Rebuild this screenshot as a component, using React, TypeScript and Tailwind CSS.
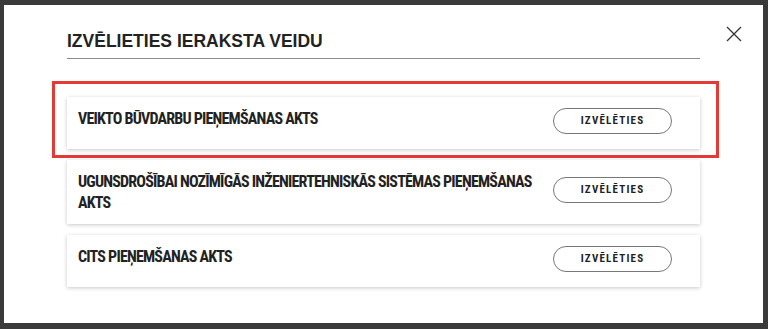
const items = [
  'VEIKTO BŪVDARBU PIEŅEMŠANAS AKTS',
  'UGUNSDROŠĪBAI NOZĪMĪGĀS INŽENIERTEHNISKĀS SISTĒMAS PIEŅEMŠANAS AKTS',
  'CITS PIEŅEMŠANAS AKTS',
];

const condensed = "font-['Roboto_Condensed','Liberation_Sans_Narrow','DejaVu_Sans_Condensed','Arial_Narrow',sans-serif]";

const App = () => {
  return (
    <div className="h-[329px] w-[768px] overflow-hidden bg-[#3a3a3a] pl-[4px] pt-[5px]">
      <div className="relative h-[318px] w-[759px] bg-white px-[63px] pt-[26px]">
        {/* close */}
        <button className="absolute right-[21px] top-[21px] h-[16px] w-[16px] text-[#333]">
          <svg viewBox="0 0 16 16" className="h-[16px] w-[16px]" fill="none" stroke="currentColor" strokeWidth="1.3">
            <path d="M1 1 L15 15 M15 1 L1 15" />
          </svg>
        </button>

        <div className="border-b border-[#8a8a8a] pb-[7px]">
          <h2 className="font-['Liberation_Sans',Arial,sans-serif] text-[17.5px] font-bold leading-[20px] text-[#222]">
            IZVĒLIETIES IERAKSTA VEIDU
          </h2>
        </div>

        <div className="mt-[38px] flex flex-col gap-[11px]">
          {items.map((label) => (
            <div
              key={label}
              className="flex items-center justify-between gap-[8px] bg-white py-[11px] pl-[11px] pr-[28px] shadow-[0_1px_4px_rgba(0,0,0,0.22)]"
            >
              <div className={`${condensed} max-w-[468px] self-start text-[16px] font-bold leading-[21px] tracking-[-0.8px] text-[#222] font-stretch-condensed`}>
                {label}
              </div>
              <button
                className={`${condensed} mb-[4px] h-[26px] w-[119px] shrink-0 rounded-full border border-[#777] text-[11px] font-bold tracking-[1.2px] text-[#222] font-stretch-condensed`}
              >
                IZVĒLĒTIES
              </button>
            </div>
          ))}
        </div>

        {/* highlight overlay */}
        <div className="pointer-events-none absolute left-[48px] top-[76px] h-[77px] w-[667px] border-[3px] border-[#e53935]" />
      </div>
    </div>
  );
};

export default App;
